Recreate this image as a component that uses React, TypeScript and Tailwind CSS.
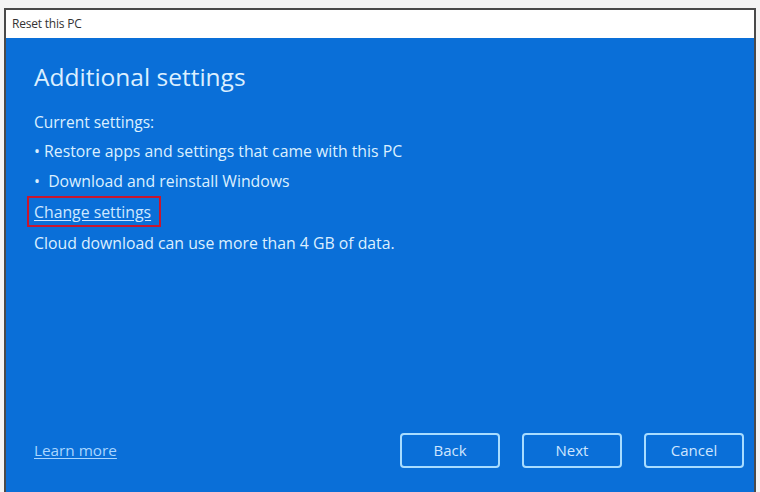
import React from "react";

export default function App() {
  return (
    <div className="w-[760px] h-[492px] bg-[#f4f4f4] pt-[8px] pl-[4px] pr-[4px] overflow-hidden" style={{ fontFamily: '"Open Sans", "Liberation Sans", sans-serif' }}>
      <div className="w-[752px] h-[490px] border-2 border-[#4a4a4a] flex flex-col bg-white">
        <div className="h-[28px] bg-white flex items-center pl-[6px] text-[12px] text-[#333] tracking-[-0.2px]">
          Reset this PC
        </div>
        <div className="flex-1 bg-[#0a6fd8] flex flex-col pl-[28px] pr-[10px] text-[#eaf4ff]">
          <div className="mt-[23px] text-[24.5px] leading-[32px] text-[#dcefff]">Additional settings</div>
          <div className="mt-[19px] text-[15.5px] leading-[20px] text-[#dcefff]">Current settings:</div>
          <div className="mt-[9px] text-[15.8px] leading-[20px] text-[#dcefff]">• Restore apps and settings that came with this PC</div>
          <div className="mt-[10px] text-[15.8px] leading-[20px] text-[#dcefff]">• &nbsp;Download and reinstall Windows</div>
          <div className="mt-[5px] -ml-[7px] self-start border-2 border-[#c8162f] pl-[5px] pr-[8px] h-[31px] flex items-center">
            <span className="text-[15.8px] leading-[20px] underline underline-offset-2 text-[#cfe8ff]">Change settings</span>
          </div>
          <div className="mt-[6px] text-[15.8px] leading-[20px] text-[#dcefff]">Cloud download can use more than 4 GB of data.</div>
          <div className="flex-1" />
          <div className="flex items-center mb-[20px]">
            <span className="text-[15.3px] underline underline-offset-2 text-[#a9d6ff]">Learn more</span>
            <div className="flex-1" />
            <div className="flex gap-[22px] pr-[0px]">
              <button className="w-[100px] h-[35px] border-2 border-[#a8dcff] rounded-[4px] text-[15px] text-[#cfe6ff]">Back</button>
              <button className="w-[100px] h-[35px] border-2 border-[#a8dcff] rounded-[4px] text-[15px] text-[#cfe6ff]">Next</button>
              <button className="w-[100px] h-[35px] border-2 border-[#a8dcff] rounded-[4px] text-[15px] text-[#cfe6ff]">Cancel</button>
            </div>
          </div>
          <div className="h-[8px]" />
        </div>
      </div>
    </div>
  );
}
